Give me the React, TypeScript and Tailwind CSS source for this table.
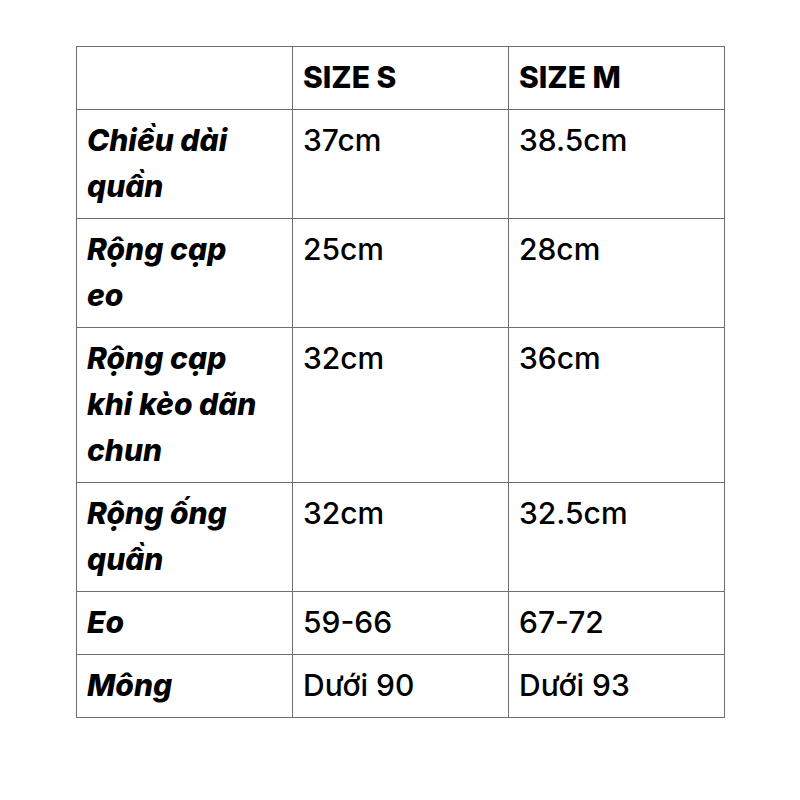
import React from 'react';

interface SizeRow {
  label: React.ReactNode;
  s: string;
  m: string;
}

const rows: SizeRow[] = [
  { label: <>Chiều dài<br />quần</>, s: '37cm', m: '38.5cm' },
  { label: <>Rộng cạp<br />eo</>, s: '25cm', m: '28cm' },
  { label: <>Rộng cạp<br />khi kèo dãn<br />chun</>, s: '32cm', m: '36cm' },
  { label: <>Rộng ống<br />quần</>, s: '32cm', m: '32.5cm' },
  { label: 'Eo', s: '59-66', m: '67-72' },
  { label: 'Mông', s: 'Dưới 90', m: 'Dưới 93' },
];

const cell =
  'border border-[#6e6e6e] px-[10px] pt-[7px] pb-[9px] align-top text-left leading-[46px] text-[30px] text-black';

export default function App() {
  return (
    <div className="w-[800px] h-[800px] bg-white pt-[46px] pl-[76px] font-['Inter','Liberation_Sans',sans-serif]">
      <table className="table-fixed border-collapse w-[648px]">
        <colgroup>
          <col className="w-[216px]" />
          <col className="w-[216px]" />
          <col className="w-[216px]" />
        </colgroup>
        <thead>
          <tr>
            <th className={cell}></th>
            <th className={`${cell} font-extrabold`}>SIZE S</th>
            <th className={`${cell} font-extrabold`}>SIZE M</th>
          </tr>
        </thead>
        <tbody>
          {rows.map((row, i) => (
            <tr key={i}>
              <td className={`${cell} font-extrabold italic`}>{row.label}</td>
              <td className={`${cell} font-medium`}>{row.s}</td>
              <td className={`${cell} font-medium`}>{row.m}</td>
            </tr>
          ))}
        </tbody>
      </table>
    </div>
  );
}
